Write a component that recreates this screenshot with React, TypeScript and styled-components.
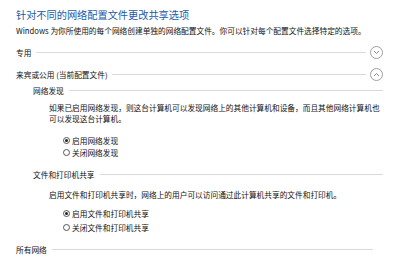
import React from 'react';
import styled, { createGlobalStyle } from 'styled-components';

const GlobalStyle = createGlobalStyle`
	html, body {
		margin: 0;
		padding: 0;
		background: #ffffff;
	}
	body {
		font-family: "Noto Sans CJK SC", "Noto Sans", sans-serif;
		color: #111111;
	}
`;

const Page = styled.div`
	width: 367px;
	height: 274px;
	padding-left: 16px;
	padding-top: 6px;
	box-sizing: content-box;
	overflow: hidden;
	display: flex;
	flex-direction: column;
`;

const Title = styled.h1`
	margin: 0;
	height: 18px;
	line-height: 18px;
	font-size: 10.2px;
	font-weight: normal;
	color: #2459a8;
	white-space: nowrap;
`;

const Subtitle = styled.div`
	height: 14px;
	line-height: 14px;
	font-size: 7.7px;
	white-space: nowrap;
`;

const HeaderRow = styled.div<{ $indent?: number; $top: number; $endGap?: number }>`
	display: flex;
	align-items: center;
	height: 14px;
	margin-top: ${p => p.$top}px;
	padding-left: ${p => p.$indent ?? 0}px;
	padding-right: ${p => p.$endGap ?? 0}px;
	font-size: 7.7px;
	white-space: nowrap;
`;

const Rule = styled.div`
	flex: 1;
	height: 1px;
	margin-left: 5px;
	background: #dadada;
`;

const Toggle = styled.span`
	width: 11px;
	height: 11px;
	margin-left: 4px;
	border: 1px solid #a0a0a0;
	border-radius: 50%;
	display: flex;
	align-items: center;
	justify-content: center;
	flex: none;
`;

const Paragraph = styled.p<{ $top: number }>`
	margin: ${p => p.$top}px 0 0 33px;
	max-width: 331px;
	font-size: 7.7px;
	line-height: 11px;
`;

const RadioGroup = styled.div<{ $top: number; $row: number }>`
	margin-top: ${p => p.$top}px;
	padding-left: 47px;
	display: grid;
	grid-auto-rows: ${p => p.$row}px;
`;

const RadioRow = styled.label`
	display: flex;
	align-items: center;
	font-size: 7.7px;
	white-space: nowrap;
`;

const RadioMark = styled.span<{ $checked?: boolean }>`
	width: 7px;
	height: 7px;
	margin-right: 2px;
	border: 1px solid #555555;
	border-radius: 50%;
	box-sizing: border-box;
	display: flex;
	align-items: center;
	justify-content: center;
	flex: none;
	&::after {
		content: '';
		width: 3px;
		height: 3px;
		border-radius: 50%;
		background: ${p => (p.$checked ? '#222222' : 'transparent')};
	}
`;

function Chevron({ up }: { up?: boolean }) {
	return (
		<svg width="7" height="5" viewBox="0 0 7 5">
			<path
				d={up ? 'M1 4 L3.5 1.5 L6 4' : 'M1 1 L3.5 3.5 L6 1'}
				fill="none"
				stroke="#8a8a8a"
				strokeWidth="1"
			/>
		</svg>
	);
}

function Section({
	label,
	top,
	indent,
	toggle,
	endGap
}: {
	label: string;
	top: number;
	indent?: number;
	toggle?: 'up' | 'down';
	endGap?: number;
}) {
	return (
		<HeaderRow $top={top} $indent={indent} $endGap={endGap}>
			<span>{label}</span>
			<Rule />
			{toggle && (
				<Toggle>
					<Chevron up={toggle === 'up'} />
				</Toggle>
			)}
		</HeaderRow>
	);
}

export default function App() {
	return (
		<>
			<GlobalStyle />
			<Page>
				<Title>针对不同的网络配置文件更改共享选项</Title>
				<Subtitle>Windows 为你所使用的每个网络创建单独的网络配置文件。你可以针对每个配置文件选择特定的选项。</Subtitle>

				<Section label="专用" top={7} toggle="down" />
				<Section label="来宾或公用 (当前配置文件)" top={8} toggle="up" />
				<Section label="网络发现" top={2} indent={17} />
				<Paragraph $top={5}>
					如果已启用网络发现，则这台计算机可以发现网络上的其他计算机和设备，而且其他网络计算机也可以发现这台计算机。
				</Paragraph>
				<RadioGroup $top={10} $row={12}>
					<RadioRow>
						<RadioMark $checked />
						启用网络发现
					</RadioRow>
					<RadioRow>
						<RadioMark />
						关闭网络发现
					</RadioRow>
				</RadioGroup>

				<Section label="文件和打印机共享" top={9} indent={17} />
				<Paragraph $top={8}>启用文件和打印机共享时，网络上的用户可以访问通过此计算机共享的文件和打印机。</Paragraph>
				<RadioGroup $top={6} $row={14}>
					<RadioRow>
						<RadioMark $checked />
						启用文件和打印机共享
					</RadioRow>
					<RadioRow>
						<RadioMark />
						关闭文件和打印机共享
					</RadioRow>
				</RadioGroup>

				<Section label="所有网络" top={8} endGap={10} />
			</Page>
		</>
	);
}
